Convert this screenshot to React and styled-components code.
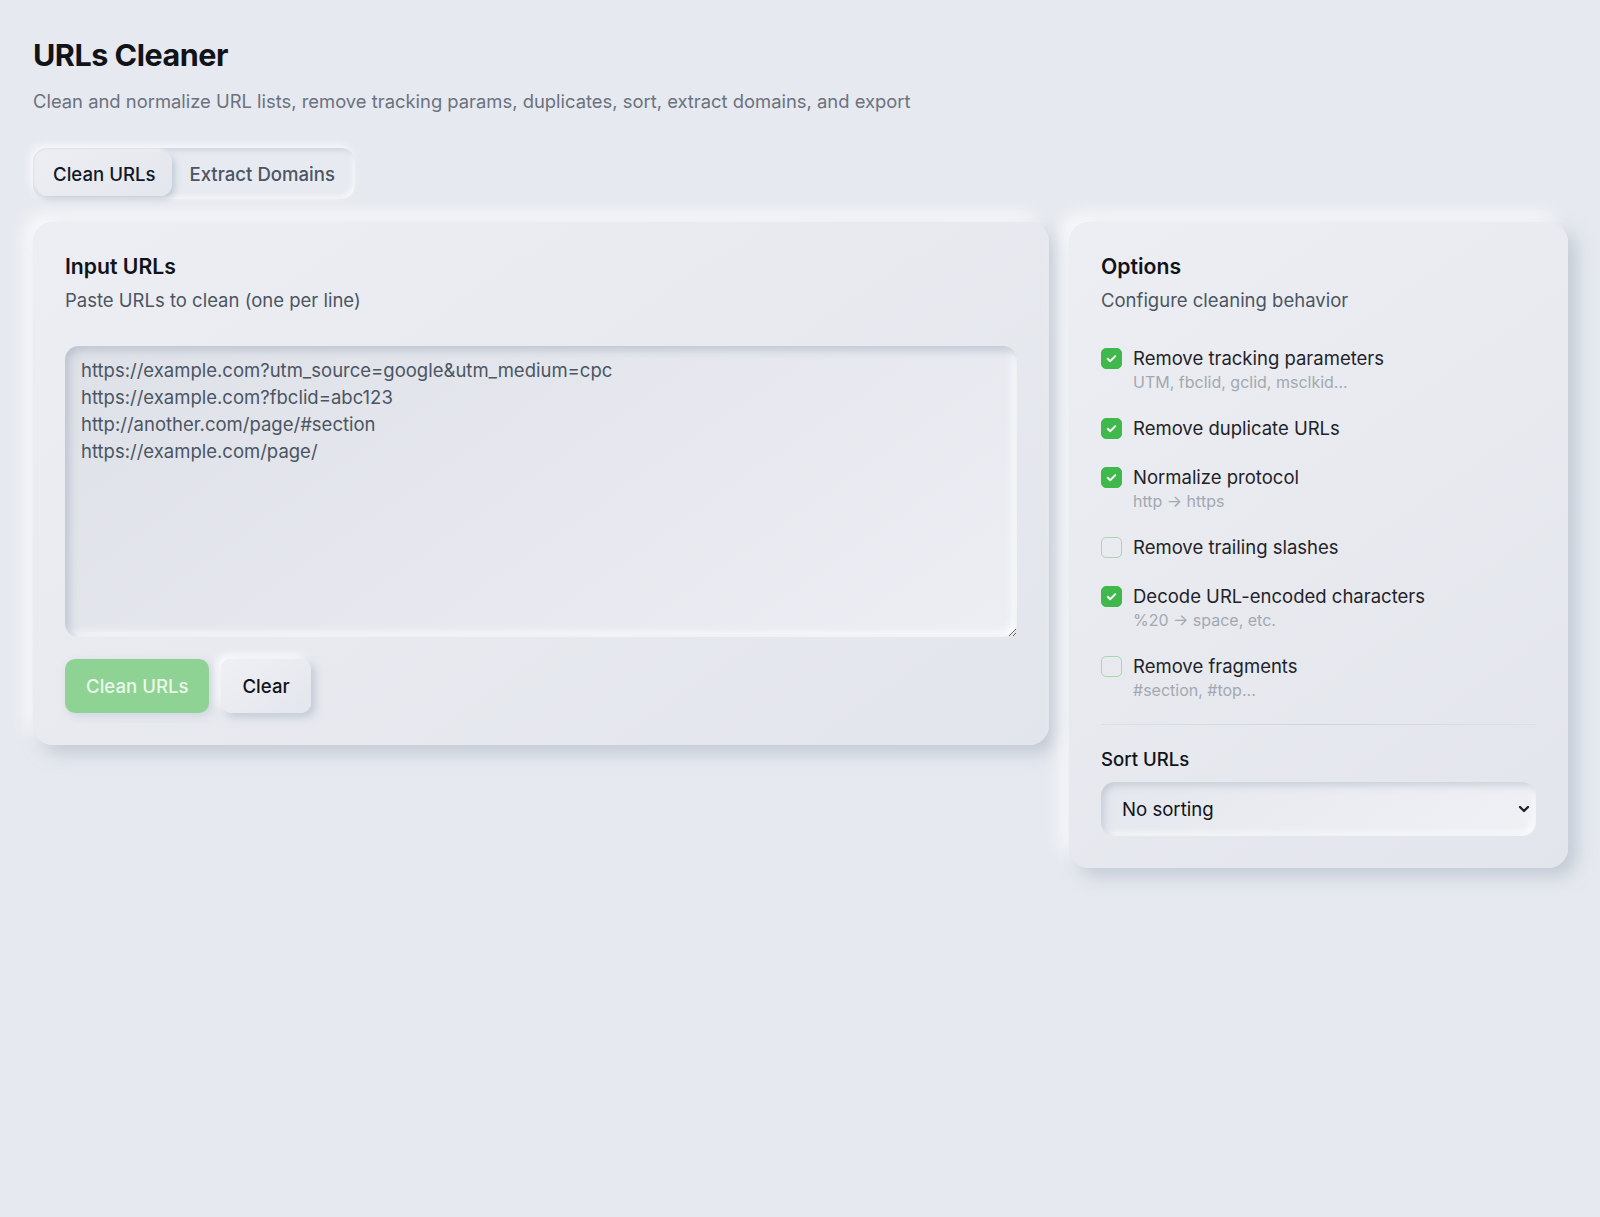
import React, { useState } from "react";
import styled, { createGlobalStyle } from "styled-components";

const GlobalStyle = createGlobalStyle`
  * { box-sizing: border-box; }
  body {
    margin: 0;
    background: #e6e9ef;
    font-family: Inter, "Noto Sans", "Liberation Sans", sans-serif;
    color: #111827;
  }
`;

const Page = styled.main`
  padding: 37px 32px 48px 33px;
  min-height: 1217px;
`;

const Title = styled.h1`
  margin: 0;
  font-size: 30.5px;
  line-height: 36px;
  font-weight: 700;
  letter-spacing: -0.015em;
  color: #111318;
`;

const Subtitle = styled.p`
  margin: 14px 0 0;
  font-size: 18.4px;
  line-height: 28px;
  color: #6b7280;
`;

const TabList = styled.div`
  display: inline-flex;
  margin-top: 33px;
  padding: 3px;
  border-radius: 14px;
  background: #e7eaf0;
  box-shadow: inset 2px 2px 5px rgba(163, 174, 192, 0.45),
    inset -2px -2px 5px rgba(255, 255, 255, 0.9),
    -3px -3px 8px rgba(255, 255, 255, 0.7);
`;

const Tab = styled.button`
  border: 0;
  font: inherit;
  font-size: 18.6px;
  font-weight: 500;
  height: 45px;
  padding: 0 17px;
  border-radius: 12px;
  cursor: pointer;
  color: ${(p) => (p.$active ? "#111827" : "#4b5563")};
  background: ${(p) => (p.$active ? "linear-gradient(145deg, #eceef3, #e3e6ec)" : "transparent")};
  box-shadow: ${(p) =>
    p.$active
      ? "3px 3px 6px rgba(163, 174, 192, 0.55), -2px -2px 5px rgba(255, 255, 255, 0.85)"
      : "none"};
`;

const Grid = styled.div`
  display: grid;
  grid-template-columns: 1fr 499px;
  gap: 20px;
  align-items: start;
  margin-top: 23px;
`;

const Card = styled.section`
  padding: 30px 32px 32px;
  border-radius: 20px;
  background: linear-gradient(145deg, #eceef3 0%, #e2e5eb 100%);
  box-shadow: 8px 8px 18px rgba(163, 174, 192, 0.55),
    -8px -8px 18px rgba(255, 255, 255, 0.85);
`;

const CardTitle = styled.h2`
  margin: 0;
  font-size: 21.2px;
  line-height: 28px;
  font-weight: 600;
  color: #111318;
`;

const CardDesc = styled.p`
  margin: 6px 0 0;
  font-size: 18.5px;
  line-height: 28px;
  color: #4b5563;
`;

const UrlInput = styled.textarea`
  display: block;
  width: 100%;
  height: 291px;
  margin-top: 32px;
  padding: 11px 16px 9px;
  border: 0;
  border-radius: 14px;
  outline: none;
  resize: vertical;
  font-family: inherit;
  font-size: 18.5px;
  line-height: 27px;
  color: #4b5563;
  background: linear-gradient(145deg, #dee1e7 0%, #eceef4 100%);
  box-shadow: inset 4px 4px 8px rgba(163, 174, 192, 0.6),
    inset -4px -4px 8px rgba(255, 255, 255, 0.9);
`;

const Actions = styled.div`
  display: flex;
  gap: 12px;
  margin-top: 22px;
`;

const Button = styled.button`
  border: 0;
  font: inherit;
  font-size: 18.6px;
  font-weight: 500;
  height: 54px;
  padding: 0 21px;
  border-radius: 10px;
  cursor: pointer;
`;

const PrimaryButton = styled(Button)`
  background: #8fd394;
  color: #e9f7ea;
  box-shadow: 3px 3px 8px rgba(163, 174, 192, 0.35);
  &:disabled { cursor: not-allowed; }
`;

const SecondaryButton = styled(Button)`
  padding: 0 21px;
  color: #111318;
  background: linear-gradient(145deg, #eef0f5, #e3e6ec);
  box-shadow: 4px 4px 8px rgba(163, 174, 192, 0.55),
    -4px -4px 8px rgba(255, 255, 255, 0.9);
`;

const OptionList = styled.div`
  display: flex;
  flex-direction: column;
  gap: 22px;
  margin-top: 31px;
`;

const OptionRow = styled.label`
  display: flex;
  align-items: flex-start;
  gap: 11px;
  cursor: pointer;
`;

const Box = styled.span`
  flex: none;
  width: 21px;
  height: 21px;
  margin-top: 3px;
  border-radius: 5px;
  display: grid;
  place-items: center;
  background: ${(p) => (p.$checked ? "#3fb94b" : "transparent")};
  border: 1px solid ${(p) => (p.$checked ? "#3fb94b" : "#a9d6ad")};
`;

const OptionText = styled.span`
  display: flex;
  flex-direction: column;
`;

const OptionLabel = styled.span`
  font-size: 18.5px;
  line-height: 27px;
  color: #1f2329;
`;

const OptionHint = styled.span`
  font-size: 16px;
  line-height: 21px;
  color: #a3a8b0;
`;

const Divider = styled.hr`
  margin: 23px 0 0;
  border: 0;
  height: 1px;
  background: linear-gradient(90deg, rgba(205, 210, 218, 0.4), rgba(205, 210, 218, 0.9), rgba(205, 210, 218, 0.3));
`;

const FieldLabel = styled.div`
  margin-top: 21px;
  font-size: 18.6px;
  line-height: 26px;
  font-weight: 500;
  color: #111318;
`;

const SelectWrap = styled.div`
  position: relative;
  margin-top: 10px;
`;

const Select = styled.select`
  appearance: none;
  width: 100%;
  height: 54px;
  padding: 0 40px 0 21px;
  border: 0;
  border-radius: 14px;
  outline: none;
  font: inherit;
  font-size: 18.6px;
  color: #111318;
  background: linear-gradient(145deg, #e4e7ed 0%, #eff1f5 100%);
  box-shadow: inset 3px 3px 7px rgba(163, 174, 192, 0.5),
    inset -3px -3px 7px rgba(255, 255, 255, 0.9);
`;

const Chevron = styled.svg`
  position: absolute;
  right: 4px;
  top: 50%;
  transform: translateY(-50%);
  pointer-events: none;
`;

const Check = () => (
  <svg width="13" height="13" viewBox="0 0 24 24" fill="none" stroke="#fff" strokeWidth="3.5" strokeLinecap="round" strokeLinejoin="round">
    <path d="M5 12.5l4.5 4.5L19 7.5" />
  </svg>
);

const options = [
  { id: "tracking", label: "Remove tracking parameters", hint: "UTM, fbclid, gclid, msclkid...", on: true },
  { id: "dupes", label: "Remove duplicate URLs", on: true },
  { id: "protocol", label: "Normalize protocol", hint: "http → https", on: true },
  { id: "slashes", label: "Remove trailing slashes", on: false },
  { id: "decode", label: "Decode URL-encoded characters", hint: "%20 → space, etc.", on: true },
  { id: "fragments", label: "Remove fragments", hint: "#section, #top...", on: false },
];

const sample = `https://example.com?utm_source=google&utm_medium=cpc
https://example.com?fbclid=abc123
http://another.com/page/#section
https://example.com/page/`;

export default function App() {
  const [tab, setTab] = useState("clean");
  const [text, setText] = useState(sample);
  const [checked, setChecked] = useState(
    Object.fromEntries(options.map((o) => [o.id, o.on]))
  );

  return (
    <Page>
      <GlobalStyle />
      <Title>URLs Cleaner</Title>
      <Subtitle>
        Clean and normalize URL lists, remove tracking params, duplicates, sort, extract domains, and export
      </Subtitle>

      <TabList>
        <Tab $active={tab === "clean"} onClick={() => setTab("clean")}>Clean URLs</Tab>
        <Tab $active={tab === "domains"} onClick={() => setTab("domains")}>Extract Domains</Tab>
      </TabList>

      <Grid>
        <Card>
          <CardTitle>Input URLs</CardTitle>
          <CardDesc>Paste URLs to clean (one per line)</CardDesc>
          <UrlInput value={text} onChange={(e) => setText(e.target.value)} spellCheck={false} />
          <Actions>
            <PrimaryButton disabled>Clean URLs</PrimaryButton>
            <SecondaryButton onClick={() => setText("")}>Clear</SecondaryButton>
          </Actions>
        </Card>

        <Card>
          <CardTitle>Options</CardTitle>
          <CardDesc>Configure cleaning behavior</CardDesc>
          <OptionList>
            {options.map((o) => (
              <OptionRow
                key={o.id}
                onClick={() => setChecked((c) => ({ ...c, [o.id]: !c[o.id] }))}
              >
                <Box $checked={checked[o.id]}>{checked[o.id] && <Check />}</Box>
                <OptionText>
                  <OptionLabel>{o.label}</OptionLabel>
                  {o.hint && <OptionHint>{o.hint}</OptionHint>}
                </OptionText>
              </OptionRow>
            ))}
          </OptionList>
          <Divider />
          <FieldLabel>Sort URLs</FieldLabel>
          <SelectWrap>
            <Select defaultValue="none">
              <option value="none">No sorting</option>
              <option value="asc">A → Z</option>
              <option value="desc">Z → A</option>
            </Select>
            <Chevron width="16" height="16" viewBox="0 0 24 24" fill="none" stroke="#1f2329" strokeWidth="3.5" strokeLinecap="round" strokeLinejoin="round">
              <path d="M6 9l6 6 6-6" />
            </Chevron>
          </SelectWrap>
        </Card>
      </Grid>
    </Page>
  );
}
